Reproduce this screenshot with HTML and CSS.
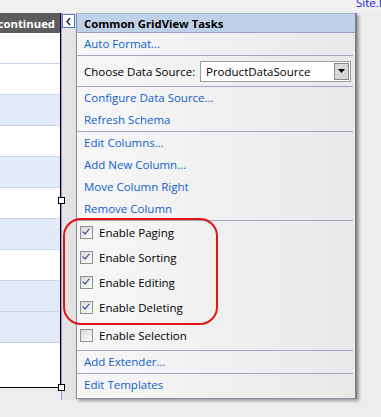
FILE: index.html
```html
<!DOCTYPE html>
<html lang="en">
<head>
    <meta charset="UTF-8">
    <title>Common GridView Tasks</title>
    <link rel="stylesheet" href="styles.css">
</head>
<body>

    <div class="top">
        <span class="site-link">Site.Master</span>
    </div>

    <div class="designer">
        <div class="grid">
            <div class="grid-head"><span>continued</span></div>
            <div class="row"></div>
            <div class="row"></div>
            <div class="row alt"></div>
            <div class="row"></div>
            <div class="row alt"></div>
            <div class="row"></div>
            <div class="row alt"></div>
            <div class="row"></div>
            <div class="row alt"></div>
            <div class="row alt"></div>
            <div class="row last"></div>
            <span class="handle handle-mid"></span>
            <span class="handle handle-end"></span>
        </div>

        <div class="tag">
            <span class="tag-btn">
                <svg width="7" height="9" viewBox="0 0 7 9"><path d="M5 1 L2 4.5 L5 8" fill="none" stroke="#222" stroke-width="1.4"/></svg>
            </span>
        </div>

        <div class="tasks">
            <div class="tasks-head">Common GridView Tasks</div>

            <div class="group">
                <a href="#" class="item">Auto Format...</a>
            </div>

            <div class="group source">
                <span class="label">Choose Data Source:</span>
                <div class="select">
                    <span>ProductDataSource</span>
                    <span class="select-arrow">
                        <svg width="7" height="4" viewBox="0 0 7 4"><path d="M0 0 H7 L3.5 4 Z" fill="#000"/></svg>
                    </span>
                </div>
            </div>

            <div class="group">
                <a href="#" class="item">Configure Data Source...</a>
                <a href="#" class="item">Refresh Schema</a>
            </div>

            <div class="group">
                <a href="#" class="item">Edit Columns...</a>
                <a href="#" class="item">Add New Column...</a>
                <a href="#" class="item">Move Column Right</a>
                <a href="#" class="item">Remove Column</a>
            </div>

            <div class="group checks">
                <label class="check"><span class="box on"></span>Enable Paging</label>
                <label class="check"><span class="box on"></span>Enable Sorting</label>
                <label class="check"><span class="box on"></span>Enable Editing</label>
                <label class="check"><span class="box on"></span>Enable Deleting</label>
                <label class="check"><span class="box"></span>Enable Selection</label>
            </div>

            <div class="group">
                <a href="#" class="item">Add Extender...</a>
            </div>

            <div class="group last-group">
                <a href="#" class="item">Edit Templates</a>
            </div>
        </div>

        <div class="highlight"></div>
    </div>

</body>
</html>
```

FILE: styles.css
```css
body {
    margin: 0;
    font-family: 'Open Sans', 'Noto Sans', sans-serif;
    font-size: 11.5px;
    background: #ededed;
    color: #000;
    width: 381px;
    height: 417px;
    overflow: hidden;
}

.top {
    height: 13px;
    background: #f0f0f0;
    overflow: hidden;
    white-space: nowrap;
}

.site-link {
    display: block;
    margin: -4px 0 0 356px;
    font-size: 11.5px;
    line-height: 14px;
    color: #1818d8;
}

.designer {
    position: relative;
    display: flex;
    align-items: flex-start;
}

/* grid on the left */
.grid {
    position: relative;
    width: 60px;
    border-right: 1px solid #000;
    border-bottom: 1px solid #000;
    background: #fff;
}

.grid-head {
    height: 20px;
    background: #5d5d5d;
    color: #fff;
    font-weight: bold;
    font-size: 11.3px;
    display: flex;
    justify-content: flex-end;
    align-items: center;
    overflow: hidden;
    white-space: nowrap;
    padding-right: 5px;
}

.row {
    height: 30px;
    border-bottom: 1px solid #c8d7ee;
    background: #fff;
}

.row:first-of-type {
    height: 31px;
}

.row.alt {
    background: #e2ecf9;
}

.row.last {
    height: 44px;
    border-bottom: none;
}

.handle {
    position: absolute;
    right: -5px;
    width: 7px;
    height: 7px;
    background: #fff;
    border: 1px solid #000;
    box-sizing: border-box;
}

.handle-mid {
    top: 184px;
}

.handle-end {
    bottom: -4px;
}

/* smart tag strip */
.tag {
    width: 14px;
    height: 387px;
    background: #e3e3e3;
    border-left: 1px solid #b48ae8;
}

.tag-btn {
    display: flex;
    align-items: center;
    justify-content: center;
    width: 13px;
    height: 14px;
    margin-top: 1px;
    box-sizing: border-box;
    background: #fff;
    border: 1px solid #4b78d2;
}

/* task panel */
.tasks {
    width: 278px;
    background: linear-gradient(to right, #f7f7f7, #e9e9e9);
    border: 1px solid #8e8ea2;
    border-right: 2px solid #7d7d8c;
    border-top: none;
    box-shadow: 2px 2px 3px rgba(0, 0, 0, 0.35);
}

.tasks-head {
    height: 20px;
    line-height: 19px;
    background: #bed1e9;
    border-top: 1px solid #a8b8d0;
    border-bottom: 1px solid #9aa2b8;
    padding-left: 7px;
    font-weight: bold;
    font-size: 11.3px;
    box-sizing: border-box;
}

.group {
    display: flex;
    flex-direction: column;
    border-bottom: 1px solid #a4a4ba;
    margin-right: 2px;
}

.group:last-child {
    border-bottom: none;
}

.last-group {
    padding-bottom: 2px;
}

.item {
    height: 22px;
    line-height: 22px;
    padding-left: 7px;
    color: #0f5fcf;
    text-decoration: none;
}

.source {
    flex-direction: row;
    align-items: center;
    height: 30px;
    padding-left: 7px;
}

.label {
    width: 116px;
}

.select {
    flex: 1;
    height: 21px;
    margin-right: 2px;
    background: #fff;
    border: 1px solid #9c9c9c;
    display: flex;
    align-items: center;
    justify-content: space-between;
    padding-left: 5px;
    box-sizing: border-box;
}

.select-arrow {
    width: 15px;
    height: 17px;
    margin-right: 1px;
    background: #d8d8d8;
    border: 1px solid #8a8a8a;
    box-sizing: border-box;
    display: flex;
    align-items: center;
    justify-content: center;
}

.checks {
    margin-top: -1px;
}

.check {
    height: 25px;
    display: flex;
    align-items: center;
    padding-left: 3px;
}

.check:last-child {
    height: 30px;
}

.box {
    width: 13px;
    height: 13px;
    margin-right: 6px;
    box-sizing: border-box;
    border: 1px solid #8f9093;
    background: linear-gradient(135deg, #d8d8d8, #fbfbfb);
    position: relative;
}

.box.on::after {
    content: "";
    position: absolute;
    left: 3px;
    top: 0;
    width: 3px;
    height: 6px;
    border-right: 1.5px solid #22368c;
    border-bottom: 1.5px solid #22368c;
    transform: rotate(40deg);
}

/* red marker drawn over the checkboxes */
.highlight {
    position: absolute;
    left: 63px;
    top: 205px;
    width: 155px;
    height: 107px;
    border: 2px solid #e21515;
    border-radius: 18px;
    box-sizing: border-box;
}
```
